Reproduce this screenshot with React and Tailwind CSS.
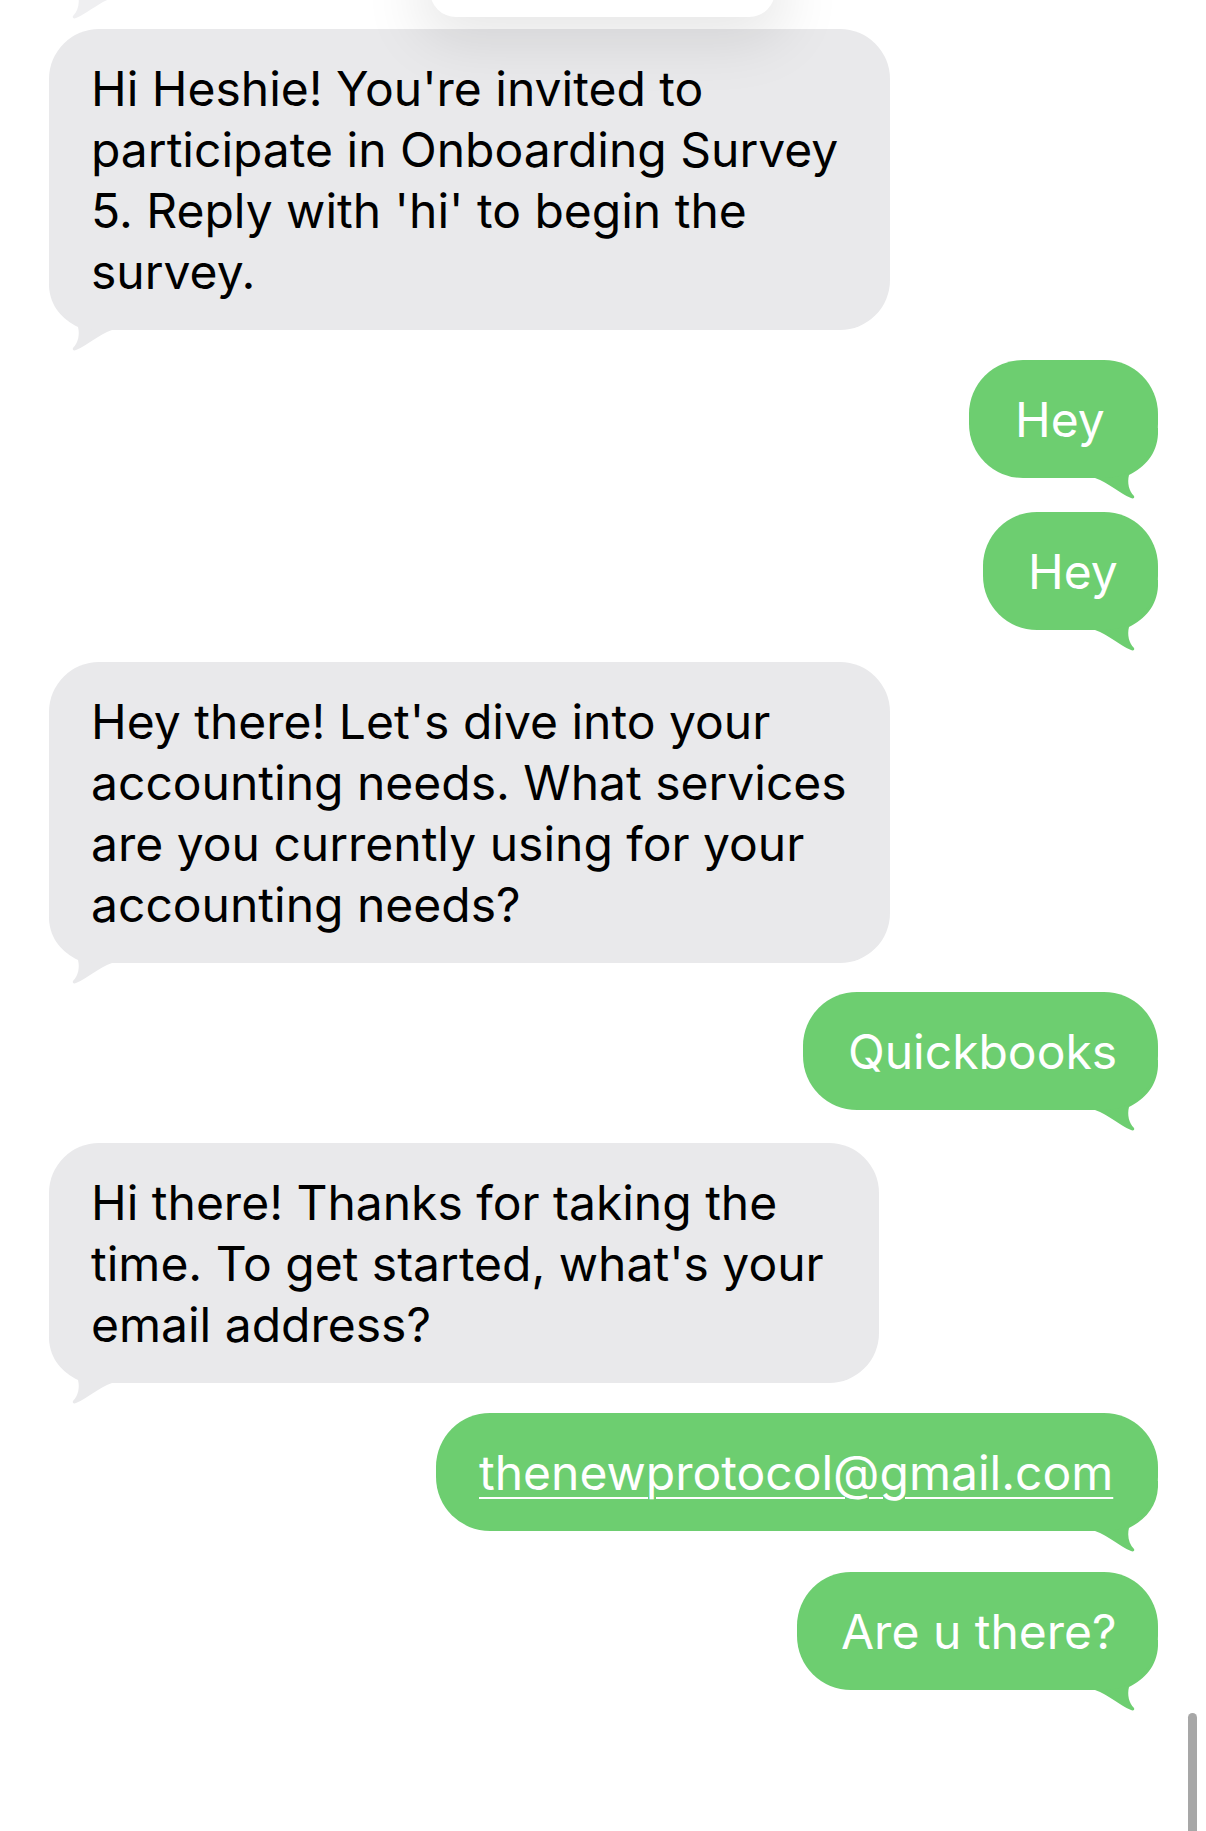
import React from "react";

const GREY = "#e9e9eb";
const GREEN = "#6dce70";

function Tail({ color, right }) {
  return (
    <svg
      width="64"
      height="71"
      viewBox="0 -50 64 71"
      className={
        right
          ? "absolute right-0 bottom-[-21px] -scale-x-100"
          : "absolute left-0 bottom-[-21px]"
      }
    >
      <path
        d="M0 -44 C1 -24 13 -11 29 -3 C31 5 29 13 24 18 C23 20 25 21 27 20 C39 15 49 5 63 0 L63 -50 L0 -50 Z"
        fill={color}
      />
    </svg>
  );
}

function Incoming({ lines, w, mt }) {
  return (
    <div className={`relative self-start ${w} ${mt}`}>
      <Tail color={GREY} />
      <div className="relative rounded-[50px] bg-[#e9e9eb] pl-[42px] pr-[20px] pt-[29px] pb-[28px] text-black">
        {lines.map((l, i) => (
          <div key={i} className="whitespace-nowrap leading-[61px]">
            {l}
          </div>
        ))}
      </div>
    </div>
  );
}

function Outgoing({ text, w, mt, pl = "pl-[45px]", link }) {
  return (
    <div className={`relative self-end ${w} ${mt}`}>
      <Tail color={GREEN} right />
      <div
        className={`relative rounded-[54px] bg-[#6dce70] ${pl} pr-[20px] pt-[29px] pb-[28px] text-white`}
      >
        <div className="whitespace-nowrap leading-[61px]">
          {link ? (
            <span className="underline decoration-[2px] underline-offset-[7px]">
              {text}
            </span>
          ) : (
            text
          )}
        </div>
      </div>
    </div>
  );
}

export default function App() {
  return (
    <div
      className="relative min-h-screen w-full overflow-hidden bg-white text-[48px] tracking-normal"
      style={{ fontFamily: "Inter, 'Noto Sans', sans-serif" }}
    >
      <div className="flex flex-col pl-[49px] pr-[48px] pb-[140px]">
        {/* previous message, mostly scrolled off */}
        <div className="relative self-start w-[600px] mt-[-102px]">
          <Tail color="#efeff1" />
          <div className="relative h-[100px] rounded-[50px] bg-[#efeff1]" />
        </div>

        <Incoming
          w="w-[841px]"
          mt="mt-[31px]"
          lines={[
            "Hi Heshie! You're invited to",
            "participate in Onboarding Survey",
            "5. Reply with 'hi' to begin the",
            "survey.",
          ]}
        />

        <Outgoing text="Hey" w="w-[189px]" mt="mt-[30px]" pl="pl-[46px]" />
        <Outgoing text="Hey" w="w-[175px]" mt="mt-[34px]" />

        <Incoming
          w="w-[841px]"
          mt="mt-[32px]"
          lines={[
            "Hey there! Let's dive into your",
            "accounting needs. What services",
            "are you currently using for your",
            "accounting needs?",
          ]}
        />

        <Outgoing text="Quickbooks" w="w-[355px]" mt="mt-[29px]" />

        <Incoming
          w="w-[830px]"
          mt="mt-[33px]"
          lines={[
            "Hi there! Thanks for taking the",
            "time. To get started, what's your",
            "email address?",
          ]}
        />

        <Outgoing
          text="thenewprotocol@gmail.com"
          w="w-[722px]"
          mt="mt-[30px]"
          pl="pl-[43px]"
          link
        />
        <Outgoing text="Are u there?" w="w-[361px]" mt="mt-[41px]" pl="pl-[44px]" />
      </div>

      {/* floating header card with soft shadow */}
      <div className="absolute left-[430px] top-[-40px] z-10 h-[57px] w-[345px] rounded-[26px] bg-white shadow-[0_10px_60px_12px_rgba(0,0,0,0.10)]" />

      {/* scroll indicator */}
      <div className="absolute right-[9px] top-[1713px] z-10 h-[140px] w-[9px] rounded-full bg-[#a7a7a7]" />
    </div>
  );
}
